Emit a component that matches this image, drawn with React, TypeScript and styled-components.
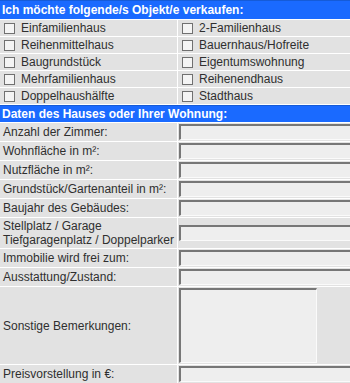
import styled, { createGlobalStyle } from "styled-components";

const objekte = [
	["Einfamilienhaus", "2-Familienhaus"],
	["Reihenmittelhaus", "Bauernhaus/Hofreite"],
	["Baugrundstück", "Eigentumswohnung"],
	["Mehrfamilienhaus", "Reihenendhaus"],
	["Doppelhaushälfte", "Stadthaus"],
];

type Field = { label: string[]; kind?: "text" | "area" };

const felder: Field[] = [
	{ label: ["Anzahl der Zimmer:"] },
	{ label: ["Wohnfläche in m²:"] },
	{ label: ["Nutzfläche in m²:"] },
	{ label: ["Grundstück/Gartenanteil in m²:"] },
	{ label: ["Baujahr des Gebäudes:"] },
	{ label: ["Stellplatz / Garage", "Tiefgaragenplatz / Doppelparker"] },
	{ label: ["Immobilie wird frei zum:"] },
	{ label: ["Ausstattung/Zustand:"] },
	{ label: ["Sonstige Bemerkungen:"], kind: "area" },
	{ label: ["Preisvorstellung in €:"] },
];

function App() {
	return (
		<>
			<GlobalStyle />
			<Frame>
				<Grid>
					<Header $height={18}>Ich möchte folgende/s Objekt/e verkaufen:</Header>
					{objekte.map((pair) =>
						pair.map((name) => (
							<CheckCell key={name}>
								<Box />
								<span>{name}</span>
							</CheckCell>
						))
					)}
					<Header $height={16}>Daten des Hauses oder Ihrer Wohnung:</Header>
					{felder.map((f) => (
						<Row key={f.label[0]}>
							<LabelCell>
								{f.label.map((line) => (
									<div key={line}>{line}</div>
								))}
							</LabelCell>
							<FieldCell>{f.kind === "area" ? <Area /> : <Input />}</FieldCell>
						</Row>
					))}
				</Grid>
			</Frame>
		</>
	);
}

const GlobalStyle = createGlobalStyle`
	body {
		margin: 0;
		background: #fff;
		font-family: "Liberation Sans", Arial, sans-serif;
	}
`;

const Frame = styled.div`
	width: 350px;
	height: 383px;
	overflow: hidden;
`;

const Grid = styled.div`
	display: grid;
	grid-template-columns: 177px 220px;
	column-gap: 1px;
	row-gap: 1px;
	font-size: 12px;
	color: #2f2f2f;
`;

const Header = styled.div<{ $height: number }>`
	grid-column: 1 / -1;
	height: ${(p) => p.$height}px;
	line-height: ${(p) => p.$height}px;
	background: #1a6aff;
	border-top: 1px solid #155bd8;
	color: #fff;
	font-weight: bold;
	padding-left: 2px;
	white-space: nowrap;
`;

const CheckCell = styled.div`
	display: flex;
	align-items: center;
	gap: 6px;
	height: 16px;
	padding-left: 4px;
	background: #e2e2e2;
	white-space: nowrap;
`;

const Box = styled.span`
	width: 9px;
	height: 9px;
	border: 1px solid #707070;
	background: #f4f4f4;
	flex-shrink: 0;
`;

const Row = styled.div`
	display: contents;
`;

const LabelCell = styled.div`
	display: flex;
	flex-direction: column;
	justify-content: center;
	background: #e2e2e2;
	padding: 1px 0 1px 3px;
	line-height: 14px;
	white-space: nowrap;
	min-height: 16px;
`;

const FieldCell = styled.div`
	display: flex;
	align-items: center;
	background: #e2e2e2;
	padding: 1px 0 1px 1px;
`;

const Input = styled.div`
	box-sizing: border-box;
	width: 220px;
	height: 16px;
	background: #eeeeee;
	border-style: solid;
	border-width: 2px 1px 1px 2px;
	border-color: #777 #fafafa #fafafa #777;
`;

const Area = styled(Input)`
	width: 138px;
	height: 75px;
`;

export default App;
